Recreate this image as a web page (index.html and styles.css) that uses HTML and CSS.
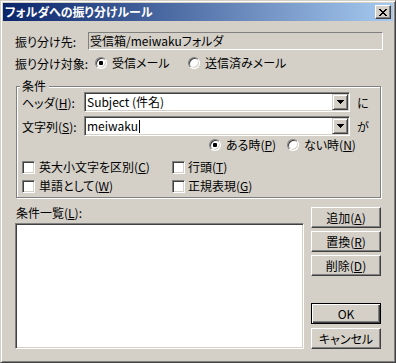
FILE: index.html
```html
<!doctype html>
<html lang="ja">
	<head>
		<meta charset="utf-8">
		<title>フォルダへの振り分けルール</title>
		<link rel="stylesheet" href="styles.css">
	</head>
	<body>
		<div class="window">
			<div class="titlebar">
				<span class="title">フォルダへの振り分けルール</span>
				<div class="close-btn">
					<svg width="8" height="7" viewBox="0 0 8 7" shape-rendering="crispEdges">
						<path fill="#000" d="M0 0h2v1H0z M6 0h2v1H6z M1 1h2v1H1z M5 1h2v1H5z M2 2h4v1H2z M3 3h2v1H3z M2 4h4v1H2z M1 5h2v1H1z M5 5h2v1H5z M0 6h2v1H0z M6 6h2v1H6z"/>
					</svg>
				</div>
			</div>

			<div class="content">
				<div class="row row-dest">
					<span class="label label-dest">振り分け先:</span>
					<div class="static-box">受信箱/meiwakuフォルダ</div>
				</div>

				<div class="row row-target">
					<span class="label label-target">振り分け対象:</span>
					<div class="option opt-recv"><span class="radio checked"></span><span>受信メール</span></div>
					<div class="option"><span class="radio"></span><span>送信済みメール</span></div>
				</div>

				<div class="group">
					<div class="group-title">条件</div>

					<div class="field-row">
						<span class="field-label">ヘッダ(<u>H</u>):</span>
						<div class="combo">
							<span class="combo-text">Subject (件名)</span>
							<span class="drop-btn">
								<svg width="7" height="4" viewBox="0 0 7 4" shape-rendering="crispEdges"><path fill="#000" d="M0 0h7v1h-1v1h-1v1h-1v1h-1v-1h-1v-1h-1v-1h-1z"/></svg>
							</span>
						</div>
						<span class="suffix">に</span>
					</div>

					<div class="field-row field-row-2">
						<span class="field-label">文字列(<u>S</u>):</span>
						<div class="combo">
							<span class="combo-text">meiwaku<span class="caret"></span></span>
							<span class="drop-btn">
								<svg width="7" height="4" viewBox="0 0 7 4" shape-rendering="crispEdges"><path fill="#000" d="M0 0h7v1h-1v1h-1v1h-1v1h-1v-1h-1v-1h-1v-1h-1z"/></svg>
							</span>
						</div>
						<span class="suffix">が</span>
					</div>

					<div class="when-row">
						<div class="option opt-when"><span class="radio checked"></span><span>ある時(<u>P</u>)</span></div>
						<div class="option"><span class="radio"></span><span>ない時(<u>N</u>)</span></div>
					</div>

					<div class="check-row">
						<div class="option opt-check"><span class="checkbox"></span><span>英大小文字を区別(<u>C</u>)</span></div>
						<div class="option opt-check2"><span class="checkbox"></span><span>行頭(<u>T</u>)</span></div>
					</div>
					<div class="check-row check-row-2">
						<div class="option opt-check"><span class="checkbox"></span><span>単語として(<u>W</u>)</span></div>
						<div class="option opt-check2"><span class="checkbox"></span><span>正規表現(<u>G</u>)</span></div>
					</div>
				</div>

				<div class="bottom">
					<div class="list-col">
						<div class="list-label">条件一覧(<u>L</u>):</div>
						<div class="listbox"></div>
					</div>
					<div class="btn-col">
						<div class="btn"><span>追加(<u>A</u>)</span></div>
						<div class="btn btn-next"><span>置換(<u>R</u>)</span></div>
						<div class="btn btn-next"><span>削除(<u>D</u>)</span></div>
						<div class="btn btn-default"><span>OK</span></div>
						<div class="btn btn-cancel"><span>キャンセル</span></div>
					</div>
				</div>
			</div>
		</div>
	</body>
</html>
```

FILE: styles.css
```css
html, body {
	margin: 0;
}

body {
	font-family: "Noto Sans CJK JP", "Liberation Sans", sans-serif;
	font-size: 12px;
	font-feature-settings: "palt";
	color: #000;
	background-color: #d4d0c8;
}

u {
	text-decoration-thickness: 1px;
	text-underline-offset: 1px;
}

.window {
	box-sizing: border-box;
	width: 396px;
	height: 363px;
	padding: 2px;
	background-color: #d4d0c8;
	border: 1px solid;
	border-color: #d4d0c8 #404040 #404040 #d4d0c8;
	box-shadow: inset 1px 1px #fff, inset -1px -1px #808080;
}

/* title bar */
.titlebar {
	display: flex;
	align-items: center;
	justify-content: space-between;
	height: 18px;
	padding: 0 2px;
	background: linear-gradient(to right, #0a246a, #a6caf0);
}

.title {
	color: #fff;
	font-weight: bold;
	line-height: 18px;
}

.close-btn {
	box-sizing: border-box;
	width: 16px;
	height: 14px;
	display: flex;
	align-items: center;
	justify-content: center;
	background-color: #d4d0c8;
	border: 1px solid;
	border-color: #fff #404040 #404040 #fff;
	box-shadow: inset -1px -1px #808080;
}

/* content */
.content {
	padding: 11px 10px 0 12px;
}

.row {
	display: flex;
	align-items: center;
}

.row-dest {
	height: 18px;
}

.label-dest {
	width: 73px;
}

.label-target {
	width: 80px;
}

.static-box {
	flex: 1;
	box-sizing: border-box;
	height: 18px;
	padding-left: 1px;
	line-height: 16px;
	border: 1px solid;
	border-color: #808080 #fff #fff #808080;
}

.row-target {
	height: 16px;
	margin-top: 5px;
}

.option {
	display: flex;
	align-items: center;
	gap: 5px;
	line-height: 16px;
	white-space: nowrap;
}

.opt-recv {
	width: 93px;
}

.radio {
	position: relative;
	box-sizing: border-box;
	width: 12px;
	height: 12px;
	border-radius: 50%;
	background-color: #fff;
	border: 1px solid;
	border-color: #808080 #fff #fff #808080;
	box-shadow: inset 1px 1px #404040, inset -1px -1px #d4d0c8;
}

.radio.checked::after {
	content: "";
	position: absolute;
	left: 3px;
	top: 3px;
	width: 4px;
	height: 4px;
	border-radius: 1px;
	background-color: #000;
}

.checkbox {
	box-sizing: border-box;
	width: 13px;
	height: 13px;
	background-color: #fff;
	border: 1px solid;
	border-color: #808080 #fff #fff #808080;
	box-shadow: inset 1px 1px #404040, inset -1px -1px #d4d0c8;
}

/* condition group */
.group {
	margin: 15px 2px 0 1px;
	padding: 0 0 3px 5px;
	border: 1px solid #808080;
	box-shadow: 1px 1px #fff, inset 1px 1px #fff;
}

.group-title {
	display: table;
	margin: -8px 0 -1px -2px;
	padding: 0 3px 0 2px;
	line-height: 14px;
	background-color: #d4d0c8;
}

.field-row {
	display: flex;
	align-items: center;
	height: 20px;
}

.field-row-2 {
	margin-top: 4px;
}

.field-label {
	width: 62px;
}

.combo {
	display: flex;
	box-sizing: border-box;
	width: 266px;
	height: 20px;
	padding: 1px;
	background-color: #fff;
	border: 1px solid;
	border-color: #808080 #fff #fff #808080;
	box-shadow: inset 1px 1px #404040, inset -1px -1px #d4d0c8;
}

.combo-text {
	flex: 1;
	display: flex;
	align-items: center;
	padding-left: 1px;
	line-height: 16px;
}

.caret {
	display: inline-block;
	width: 1px;
	height: 13px;
	margin-left: 1px;
	background-color: #000;
}

.drop-btn {
	box-sizing: border-box;
	width: 16px;
	height: 16px;
	display: flex;
	align-items: center;
	justify-content: center;
	background-color: #d4d0c8;
	border: 1px solid;
	border-color: #d4d0c8 #404040 #404040 #d4d0c8;
	box-shadow: inset 1px 1px #fff, inset -1px -1px #808080;
}

.suffix {
	margin-left: 7px;
}

.when-row {
	display: flex;
	height: 16px;
	margin: 1px 0 0 187px;
}

.opt-when {
	width: 78px;
}

.check-row {
	display: flex;
	height: 16px;
	margin-top: 6px;
}

.check-row-2 {
	margin-top: 3px;
}

.opt-check {
	width: 150px;
	gap: 4px;
}

.opt-check2 {
	gap: 3px;
}

/* list and buttons */
.bottom {
	display: flex;
	gap: 7px;
	margin: 9px 2px 0 0;
}

.list-col {
	width: 289px;
}

.list-label {
	padding-left: 1px;
	line-height: 12px;
}

.listbox {
	box-sizing: border-box;
	height: 126px;
	margin-top: 4px;
	background-color: #fff;
	border: 1px solid;
	border-color: #808080 #fff #fff #808080;
	box-shadow: inset 1px 1px #404040, inset -1px -1px #d4d0c8;
}

.btn-col {
	width: 70px;
	display: flex;
	flex-direction: column;
}

.btn {
	box-sizing: border-box;
	height: 21px;
	display: flex;
	align-items: center;
	justify-content: center;
	line-height: 16px;
	border: 1px solid;
	border-color: #fff #404040 #404040 #fff;
	box-shadow: inset -1px -1px #808080;
}

.btn-next {
	margin-top: 3px;
}

.btn-default {
	margin-top: auto;
	border-color: #000;
	box-shadow: inset 1px 1px #fff, inset -1px -1px #404040, inset -2px -2px #808080;
}

.btn-cancel {
	margin-top: 4px;
}
```
